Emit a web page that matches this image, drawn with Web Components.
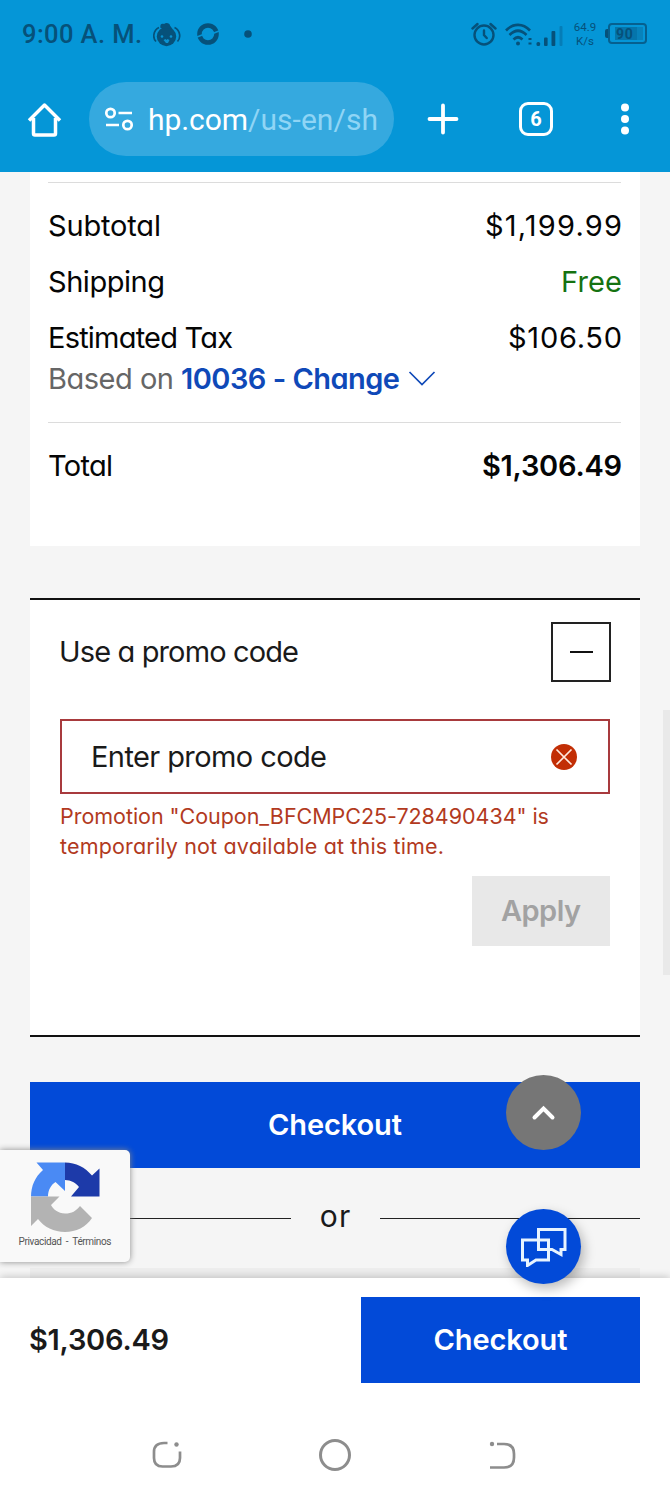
<!DOCTYPE html>
<html lang="en">
<head>
<meta charset="utf-8">
<title>Cart</title>
<style>
html,body{margin:0;padding:0;height:1500px;overflow:hidden;background:#fff}
body{font-family:Inter,"Liberation Sans",sans-serif}
</style>
</head>
<body>
<hp-screen></hp-screen>
<script>
const define = (name, html, ready) => {
  const t = document.createElement('template');
  t.innerHTML = html;
  customElements.define(name, class extends HTMLElement {
    connectedCallback() {
      if (this.shadowRoot) return;
      this.attachShadow({mode: 'open'}).append(t.content.cloneNode(true));
      if (ready) ready(this);
    }
  });
};

/* Text with a fixed advance width: tracking is derived from the natural width. */
define('track-text', `<style>
:host{display:inline-block;white-space:nowrap;line-height:1.2;font-feature-settings:"cv11"}
span{display:inline-block;white-space:pre}</style><span><slot></slot></span>`, el => {
  const w = +el.getAttribute('w'), s = el.shadowRoot.querySelector('span');
  const n = el.textContent.length - 1;
  s.style.letterSpacing = ((w - s.getBoundingClientRect().width) / n).toFixed(3) + 'px';
  el.style.width = w + 'px';
});

define('status-bar', `<style>
:host{display:flex;height:68px;align-items:center;box-sizing:border-box;padding:1px 23px 0 22px;color:#06517a;font-family:Roboto,sans-serif}
track-text{font-size:25.500px;font-weight:500}
svg{display:block;flex:none}
.l{display:flex;align-items:center;flex:1}
.net{font-size:11.5px;font-weight:400;line-height:14px;text-align:center;width:26px;margin:0 7px 0 9px;position:relative;top:-1px}
.bat{display:flex;align-items:center;position:relative;top:-1px}
.cap{width:3px;height:9px;background:#06517a;border-radius:2px 0 0 2px}
.b{box-sizing:border-box;width:39px;height:21px;border:2px solid #06608f;border-radius:4px;padding:2px 2px 2px 5px}
.f{background:linear-gradient(90deg,#0575ab 78%,#0882bb 78%);height:13px;line-height:14px;font-size:14px;font-weight:700;text-align:left;padding-left:1px;letter-spacing:.8px}
</style>
<div class="l"><track-text w="120">9:00 A. M.</track-text>
<svg width="28" height="26" viewBox="0 0 28 26" style="margin-left:11px"><g fill="#06517a"><circle cx="13.500" cy="14.500" r="9.700"/><path d="M7.500 6C6.500 2 9 1 11 2c2-2 6-1 6 1.500L19.500 7z"/></g><path d="M6 5.500C0 8.500-.500 16 3 19.500M21.500 5.500c6 3 6.500 10.500 3 14" fill="none" stroke="#06517a" stroke-width="1.700"/><g fill="#0a93d2"><circle cx="9" cy="14.500" r="1.300"/><circle cx="18" cy="14.500" r="1.300"/><path d="M10.500 18l2-1 1 1 1-1 2 1-1.500 3h-2z"/></g></svg>
<svg width="24" height="24" viewBox="0 0 24 24" style="margin:0 0 2px 15px"><circle cx="12" cy="12" r="8.500" fill="none" stroke="#06517a" stroke-width="4.600"/><path d="M1 15l7.500-3M23 9l-7.500 3" stroke="#0596d7" stroke-width="1.600"/></svg>
<svg width="10" height="10" viewBox="0 0 10 10" style="margin:0 0 2px 23px"><circle cx="5" cy="5" r="3.800" fill="#06517a"/></svg></div>
<svg width="26" height="26" viewBox="0 0 26 26" fill="none" stroke="#06517a" stroke-width="2.400" stroke-linecap="round" style="margin:0 -1px 2px 0"><circle cx="13" cy="14" r="9.500"/><path d="M13 9.500V14l2.700 3M1.500 7.500L6.500 3M24.500 7.500L19.500 3"/></svg>
<svg width="59" height="26" viewBox="0 0 59 26" style="margin:0 -1px 0 9px"><g fill="none" stroke="#06517a" stroke-width="2.600"><path d="M1 8.500C8 1 18 1 25 8.500M4.500 13C10 7.500 16 7.500 21.500 13M8.500 17.500c3-3 6-3 9 0"/></g><g fill="#06517a"><circle cx="13" cy="21.500" r="2"/><path d="M23.500 16h3v2h-3zM23.500 20.500h3v2h-3z"/><rect x="31.500" y="20" width="3.600" height="4" rx="1.500"/><rect x="39" y="15.500" width="3.600" height="8.500" rx="1"/><rect x="46.500" y="9" width="3.800" height="15" rx="1"/><rect x="54.500" y="4" width="3" height="20" rx="1" opacity=".35"/></g></svg>
<div class="net">64.9<br>K/s</div>
<div class="bat"><div class="cap"></div><div class="b"><div class="f">90</div></div></div>`);

define('browser-bar', `<style>
:host{display:flex;height:104px;align-items:center;box-sizing:border-box;padding:0 40px 2px 26px;color:#fff;font-family:Roboto,sans-serif}
svg{display:block;flex:none}
.url{display:flex;align-items:center;width:305px;height:74px;box-sizing:border-box;border-radius:37px;background:#35a9df;margin-left:26px;padding-left:15px;font-size:30px}
.url svg{margin-right:14px}
.url track-text{position:relative;top:1px}
.url track-text+track-text{color:#8fd5f5}
.tabs{box-sizing:border-box;width:34px;height:34px;border:3px solid #fff;border-radius:9px;font-weight:700;font-size:20px;text-align:center;line-height:29px;margin-left:60px}
</style>
<svg width="37" height="37" viewBox="0 0 37 37" fill="none" stroke="#fff" stroke-width="3.500" stroke-linejoin="round"><path d="M3 19.500L18.500 4 34 19.500M7.500 17v15.500q0 1.500 1.500 1.500h19q1.500 0 1.500-1.500V17"/></svg>
<div class="url"><svg width="30" height="26" viewBox="0 0 30 26" fill="none" stroke="#fff" stroke-width="2.700"><circle cx="6.500" cy="7" r="4.200"/><circle cx="23.500" cy="19" r="4.200"/><path d="M14.500 7H28M2 19h13"/></svg><track-text w="100">hp.com</track-text><track-text w="130">/us-en/sh</track-text></div>
<svg width="32" height="32" viewBox="0 0 32 32" stroke="#fff" stroke-width="3.800" stroke-linecap="round" style="margin-left:33px"><path d="M16 2.500v27M2.500 16h27"/></svg>
<div class="tabs">6</div>
<svg width="10" height="32" viewBox="0 0 10 32" fill="#fff" style="margin-left:auto"><circle cx="5" cy="4.500" r="4"/><circle cx="5" cy="16" r="4"/><circle cx="5" cy="27.500" r="4"/></svg>`);

define('sum-row', `<style>
:host{display:flex;justify-content:space-between;align-items:center;height:56px;font-size:29px;color:#050505}
</style><slot></slot><slot name="value"></slot>`);

define('order-summary', `<style>
:host{display:block;box-sizing:border-box;height:374px;margin:0 30px;padding:10px 18px 0 18px;background:#fff}
hr{border:0;height:1px;background:#dcdcdc;margin:0 1px 15px 0}
.based{display:flex;align-items:center;height:26px;margin-bottom:30px;font-size:29px;color:#666}
.link{color:#0f49b8;font-weight:600;margin:0 8px 0 7px}
.free{color:#157211}
.b{font-weight:600}
svg{display:block}
</style>
<hr>
<sum-row><track-text w="113">Subtotal</track-text><track-text slot="value" w="137">$1,199.99</track-text></sum-row>
<sum-row><track-text w="117">Shipping</track-text><track-text slot="value" class="free" w="61">Free</track-text></sum-row>
<sum-row><track-text w="185">Estimated Tax</track-text><track-text slot="value" w="114">$106.50</track-text></sum-row>
<div class="based"><track-text w="126">Based on</track-text><track-text class="link" w="219">10036 - Change</track-text><svg width="28" height="16" viewBox="0 0 28 16" fill="none" stroke="#0f49b8" stroke-width="1.700"><path d="M1.500 1L14 13.500 26.500 1"/></svg></div>
<hr>
<sum-row><track-text w="65">Total</track-text><track-text slot="value" class="b" w="140">$1,306.49</track-text></sum-row>`);

define('promo-card', `<style>
:host{display:flex;flex-direction:column;box-sizing:border-box;height:439px;margin:52px 30px 0;padding:22px 30px 0 29px;background:#fff;border:solid #111;border-width:2px 0;color:#1a1a1a;font-size:29px}
.head{display:flex;justify-content:space-between;align-items:center;height:60px;margin-right:-1px}
.head track-text,.in track-text{padding-top:1px}
.tog{box-sizing:border-box;width:60px;height:60px;border:2px solid #222;display:grid;place-items:center}
.tog i{width:23px;height:2px;background:#111}
.in{display:flex;justify-content:space-between;align-items:center;box-sizing:border-box;height:75px;border:2px solid #a83a3d;margin-top:37px;margin-left:1px;padding:0 31px 0 29px}
.err{display:flex;flex-direction:column;color:#b23a1e;font-size:21.500px;margin:7px 0 0 1px}
.err track-text{height:30px;line-height:30px}
.apply{align-self:flex-end;width:138px;height:70px;background:#e8e8e8;color:#a2a2a2;font-weight:600;display:grid;place-items:center;margin-top:15px}
</style>
<div class="head"><track-text w="240">Use a promo code</track-text><div class="tog"><i></i></div></div>
<div class="in"><track-text w="236">Enter promo code</track-text><svg width="26" height="26" viewBox="0 0 26 26"><circle cx="13" cy="13" r="13" fill="#c22e05"/><path d="M5.500 5.500l15 15M20.500 5.500l-15 15" stroke="#ffe9df" stroke-width="1.700"/></svg></div>
<div class="err"><track-text w="489">Promotion "Coupon_BFCMPC25-728490434" is</track-text><track-text w="384">temporarily not available at this time.</track-text></div>
<div class="apply"><track-text w="80">Apply</track-text></div>`);

define('checkout-button', `<style>
:host{display:grid;place-items:center;height:86px;background:#024ad8;color:#fff;font-size:29px;font-weight:600}
</style><track-text w="134">Checkout</track-text>`);

define('or-divider', `<style>
:host{display:flex;align-items:center;margin:20px 30px 0;height:58px;color:#1a1a1a;font-size:30px}
i{flex:1;height:1px;background:#222;margin-top:2px}
div{width:89px;text-align:center;margin-top:-2px}
</style><i></i><div><track-text w="30.500">or</track-text></div><i></i>`);

define('recaptcha-badge', `<style>
:host{position:absolute;left:0;top:1150px;width:130px;height:112px;background:#f9f9f9;border-radius:0 5px 5px 0;box-shadow:0 0 6px #888;display:flex;flex-direction:column;align-items:center;box-sizing:border-box;padding:12px 0 0;font-family:Roboto,sans-serif;color:#555;font-size:10px}
svg{display:block;margin-bottom:4px}
track-text{line-height:12px}
</style><svg width="70" height="70" viewBox="0 0 70 70">
<path fill="#1d3aa9" d="M35 .500V18C41 18 46 21 49 25L41 34.500H69.500V6.500L62 13.500C55 5.500 46 .500 35 .500z"/>
<path fill="#4a8af4" d="M35 .500H6.500L13 8C5 15 1 24 1 34.500H18C18 28 21 23 25.500 20L35 29z"/>
<path fill="#b3b3b3" d="M1 34.500V64L8 57C14 65 24 70 35 70 46 70 56 65 62 56L50 44C46 49 42 51.500 35 51.500 28 51.500 23 47 21 43L29.500 34.500z"/></svg>
<track-text w="93">Privacidad  -  Términos</track-text>`);

define('round-fab', `<style>
:host{position:absolute;left:506px;width:75px;height:75px;border-radius:50%;display:grid;place-items:center}
:host([kind=up]){top:1075px;background:#767676}
:host([kind=chat]){top:1209px;background:#024ad8;box-shadow:3px 5px 12px #0004}
</style><slot></slot>`);

define('sticky-bar', `<style>
:host{display:flex;justify-content:space-between;align-items:flex-start;box-sizing:border-box;height:124px;padding:19px 30px 0 29px;background:#fff;box-shadow:0 -1px 8px #0003;position:relative;color:#1a1a1a;font-size:29px;font-weight:600}
track-text{line-height:86px}
checkout-button{width:279px}
</style><track-text w="140">$1,306.49</track-text><checkout-button></checkout-button>`);

define('system-nav', `<style>
:host{display:flex;justify-content:center;gap:134px;align-items:center;height:98px;box-sizing:border-box;padding-top:8px;background:#fff;position:relative}
svg{display:block}
</style>
<svg width="34" height="34" viewBox="0 0 34 34" fill="none" stroke="#8d8d8d" stroke-width="2.700"><path d="M17.500 5H14Q4 5 4 14v6q0 8.500 8.500 8.500h8.500Q30 28.500 30 20v-6.500"/><circle cx="26.500" cy="6.500" r="2.200" fill="#8d8d8d" stroke="none"/></svg>
<svg width="34" height="34" viewBox="0 0 34 34" fill="none" stroke="#8d8d8d" stroke-width="3"><circle cx="17" cy="17" r="14.500"/></svg>
<svg width="34" height="34" viewBox="0 0 34 34" fill="none" stroke="#8d8d8d" stroke-width="2.700"><path d="M11 6h7q10 0 10 10v3.500q0 10-10 10H4"/><circle cx="6" cy="6" r="2.200" fill="#8d8d8d" stroke="none"/></svg>`);

define('hp-screen', `<style>
:host{display:flex;flex-direction:column;position:relative;width:670px;height:1500px;overflow:hidden}
header{background:#0596d7;height:172px;flex:none}
main{background:#f5f5f5;height:1106px;flex:none;overflow:hidden}
.pay{height:85px;margin:0 30px;margin-top:22px;background:#ededed}
.co{margin:45px 30px 0}
.bar{position:absolute;left:663px;top:710px;width:7px;height:265px;background:#e9e9e9}
sticky-bar,system-nav{flex:none}
</style>
<header><status-bar></status-bar><browser-bar></browser-bar></header>
<main><order-summary></order-summary><promo-card></promo-card>
<checkout-button class="co"></checkout-button><or-divider></or-divider><div class="pay"></div></main>
<sticky-bar></sticky-bar><system-nav></system-nav>
<div class="bar"></div>
<recaptcha-badge></recaptcha-badge>
<round-fab kind="up"><svg width="26" height="18" viewBox="0 0 26 18" fill="none" stroke="#fff" stroke-width="4" stroke-linecap="round"><path d="M3.500 13.500L12.500 4.500l9 9"/></svg></round-fab>
<round-fab kind="chat"><svg width="46" height="40" viewBox="0 0 46 40" fill="none" stroke="#e8f4ff" stroke-width="3"><path d="M17.500 2.500H44v20h-4v5L31 22.500H17.500zM1.500 13h26v20H15l-8.500 5.500V33h-5z"/></svg></round-fab>`);
</script>
</body>
</html>
